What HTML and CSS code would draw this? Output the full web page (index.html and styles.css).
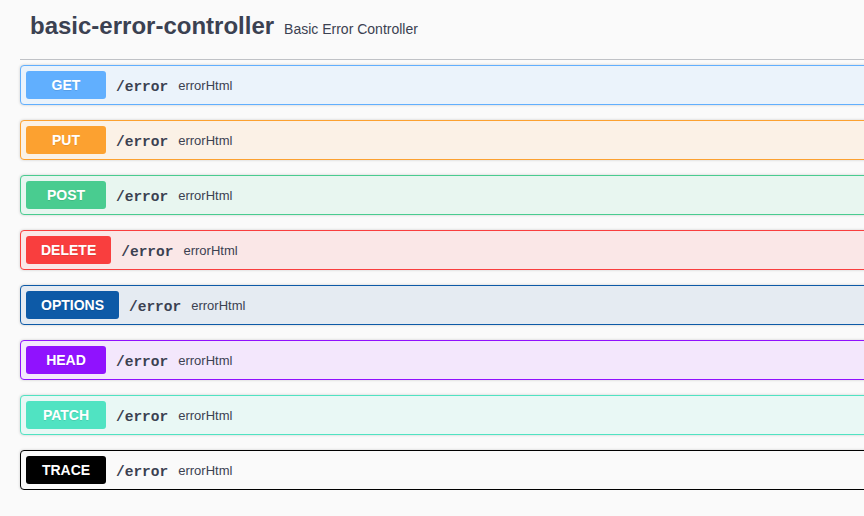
FILE: index.html
```html
<!DOCTYPE html>
<html>
<head>
<meta charset="utf-8">
<link rel="stylesheet" href="styles.css">
</head>
<body>
<div class="wrap">
  <h4 class="tag">
    <span class="tag-name">basic-error-controller</span>
    <small class="tag-desc">Basic Error Controller</small>
  </h4>
  <div class="ops">
    <div class="op get"><span class="method">GET</span><span class="path">/error</span><span class="desc">errorHtml</span></div>
    <div class="op put"><span class="method">PUT</span><span class="path">/error</span><span class="desc">errorHtml</span></div>
    <div class="op post"><span class="method">POST</span><span class="path">/error</span><span class="desc">errorHtml</span></div>
    <div class="op delete"><span class="method">DELETE</span><span class="path">/error</span><span class="desc">errorHtml</span></div>
    <div class="op options"><span class="method">OPTIONS</span><span class="path">/error</span><span class="desc">errorHtml</span></div>
    <div class="op head"><span class="method">HEAD</span><span class="path">/error</span><span class="desc">errorHtml</span></div>
    <div class="op patch"><span class="method">PATCH</span><span class="path">/error</span><span class="desc">errorHtml</span></div>
    <div class="op trace"><span class="method">TRACE</span><span class="path">/error</span><span class="desc">errorHtml</span></div>
  </div>
</div>
</body>
</html>
```

FILE: styles.css
```css
html, body {
  margin: 0;
  padding: 0;
  background: #fafafa;
  overflow: hidden;
  font-family: "Liberation Sans", Arial, sans-serif;
  color: #3b4151;
}

.wrap {
  width: 1000px;
  padding: 0 0 0 20px;
}

.tag {
  margin: 0 0 5px;
  height: 60px;
  box-sizing: border-box;
  padding: 12px 20px 0 10px;
  border-bottom: 1px solid rgba(59, 65, 81, 0.3);
  display: flex;
  align-items: baseline;
  gap: 10px;
  font-weight: normal;
  line-height: 28px;
}

.tag-name {
  font-size: 24px;
  font-weight: bold;
  color: #3b4151;
}

.tag-desc {
  font-size: 14px;
  color: #3b4151;
}

.ops {
  display: flex;
  flex-direction: column;
  gap: 15px;
}

.op {
  height: 40px;
  box-sizing: border-box;
  border: 1px solid #000;
  border-radius: 4px;
  box-shadow: 0 0 3px rgba(0, 0, 0, 0.19);
  padding: 5px;
  display: flex;
  align-items: center;
}

.method {
  min-width: 80px;
  height: 28px;
  box-sizing: border-box;
  padding: 0 15px;
  border-radius: 3px;
  color: #fff;
  font-size: 14px;
  font-weight: bold;
  text-align: center;
  line-height: 28px;
  text-shadow: 0 1px 0 rgba(0, 0, 0, 0.1);
}

.path {
  padding: 0 10px;
  font-family: "Liberation Mono", "Courier New", monospace;
  font-weight: bold;
  font-size: 14.5px;
  color: #3b4151;
  padding-top: 3px;
}

.desc {
  font-size: 13px;
  color: #3b4151;
  padding-top: 1px;
}

.get { border-color: #61affe; background: #ebf3fb; }
.get .method { background: #61affe; }

.put { border-color: #fca130; background: #fbf1e6; }
.put .method { background: #fca130; }

.post { border-color: #49cc90; background: #e8f6f0; }
.post .method { background: #49cc90; }

.delete { border-color: #f93e3e; background: #fae7e7; }
.delete .method { background: #f93e3e; }

.options { border-color: #0d5aa7; background: #e5ebf2; }
.options .method { background: #0d5aa7; }

.head { border-color: #9012fe; background: #f3e7fc; }
.head .method { background: #9012fe; }

.patch { border-color: #50e3c2; background: #e9f8f5; }
.patch .method { background: #50e3c2; }

.trace { border-color: #000; background: #fafafa; }
.trace .method { background: #000; }
```
